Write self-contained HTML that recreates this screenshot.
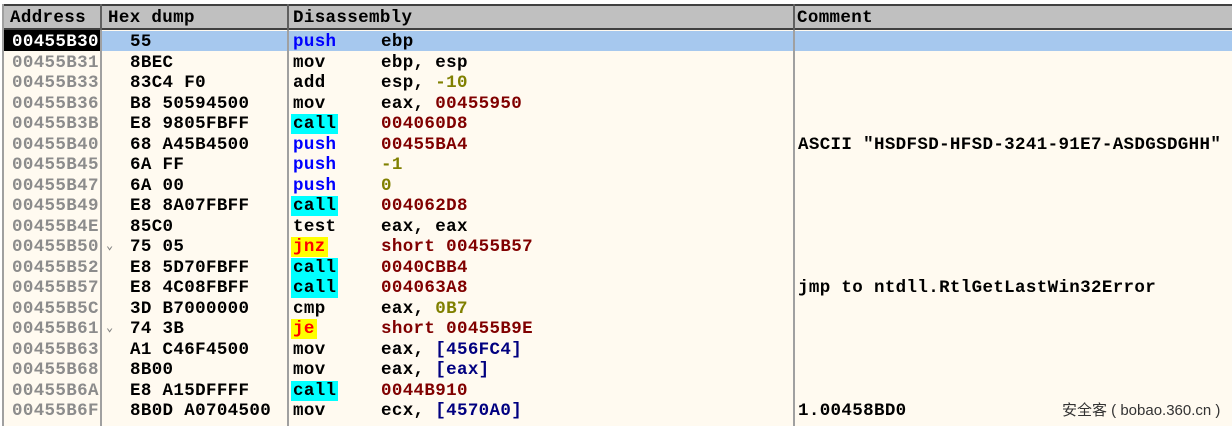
<!DOCTYPE html>
<html><head><meta charset="utf-8"><style>
*{margin:0;padding:0;box-sizing:border-box}
body{width:1232px;height:426px;background:#fff;position:relative;overflow:hidden;font-family:"Liberation Mono",monospace;font-weight:bold;font-size:17.5px;letter-spacing:0.35px}
#bg{position:absolute;left:2px;top:4px;width:1230px;height:422px;background:#fffaf0;border-left:2px solid #a0a0a0}
#hdr{position:absolute;left:4px;top:4px;width:1228px;height:26px;background:#c0c0c0;border-top:2px solid #404040;border-bottom:2px solid #404040}
.h{position:absolute;top:7px;line-height:22px;color:#000}
.vs{position:absolute;top:4px;width:2px;height:422px;background:#a0a0a0}
.vh{position:absolute;top:4px;width:2px;height:26px;background:#606060}
#sel{position:absolute;left:102px;top:31px;width:1130px;height:20px;background:#a6c8ee}
#selA{position:absolute;left:4px;top:30px;width:96px;height:21px;background:#000}
.r{position:absolute;height:20px;line-height:22px;white-space:pre}
.a{left:12px;color:#8c8c8c}
.x{left:130px;color:#000}
.m{left:293px;color:#000}
.o{left:381px;color:#000}
.c{left:798px;color:#000}
.bl{color:#0000ff}
.cy{background:#00ffff;padding:0 2px;margin-left:-2px}
.ye{background:#ffff00;color:#ff0000;padding:0 2px;margin-left:-2px}
.rd{color:#800000}
.ol{color:#808000}
.nv{color:#000080}
.ar{position:absolute;left:106px;color:#808080;font-size:12px}
#wm{position:absolute;left:1062px;top:399px;font-family:"Liberation Sans","Noto Sans CJK SC",sans-serif;font-weight:normal;font-size:15px;letter-spacing:0;color:#333}
</style></head><body>
<div id="bg"></div>
<div id="sel"></div>
<div id="selA"></div>
<div id="hdr"></div>
<div class="vs" style="left:100px"></div>
<div class="vs" style="left:287px"></div>
<div class="vs" style="left:793px"></div>
<div class="vh" style="left:100px"></div>
<div class="vh" style="left:287px"></div>
<div class="vh" style="left:793px"></div>
<div class="h" style="left:10px">Address</div>
<div class="h" style="left:108px">Hex dump</div>
<div class="h" style="left:293px">Disassembly</div>
<div class="h" style="left:797px">Comment</div>

<div class="r a" style="top:31px;color:#fff">00455B30</div><div class="r x" style="top:31px">55</div><div class="r m bl" style="top:31px">push</div><div class="r o" style="top:31px">ebp</div>
<div class="r a" style="top:51.5px">00455B31</div><div class="r x" style="top:51.5px">8BEC</div><div class="r m" style="top:51.5px">mov</div><div class="r o" style="top:51.5px">ebp, esp</div>
<div class="r a" style="top:72px">00455B33</div><div class="r x" style="top:72px">83C4 F0</div><div class="r m" style="top:72px">add</div><div class="r o" style="top:72px">esp, <span class="ol">-10</span></div>
<div class="r a" style="top:92.5px">00455B36</div><div class="r x" style="top:92.5px">B8 50594500</div><div class="r m" style="top:92.5px">mov</div><div class="r o" style="top:92.5px">eax, <span class="rd">00455950</span></div>
<div class="r a" style="top:113px">00455B3B</div><div class="r x" style="top:113px">E8 9805FBFF</div><div class="r m" style="top:113px"><span class="cy">call</span></div><div class="r o rd" style="top:113px">004060D8</div>
<div class="r a" style="top:133.5px">00455B40</div><div class="r x" style="top:133.5px">68 A45B4500</div><div class="r m bl" style="top:133.5px">push</div><div class="r o rd" style="top:133.5px">00455BA4</div><div class="r c" style="top:133.5px">ASCII "HSDFSD-HFSD-3241-91E7-ASDGSDGHH"</div>
<div class="r a" style="top:154px">00455B45</div><div class="r x" style="top:154px">6A FF</div><div class="r m bl" style="top:154px">push</div><div class="r o ol" style="top:154px">-1</div>
<div class="r a" style="top:174.5px">00455B47</div><div class="r x" style="top:174.5px">6A 00</div><div class="r m bl" style="top:174.5px">push</div><div class="r o ol" style="top:174.5px">0</div>
<div class="r a" style="top:195px">00455B49</div><div class="r x" style="top:195px">E8 8A07FBFF</div><div class="r m" style="top:195px"><span class="cy">call</span></div><div class="r o rd" style="top:195px">004062D8</div>
<div class="r a" style="top:215.5px">00455B4E</div><div class="r x" style="top:215.5px">85C0</div><div class="r m" style="top:215.5px">test</div><div class="r o" style="top:215.5px">eax, eax</div>
<div class="r a" style="top:236px">00455B50</div><div class="ar" style="top:238px">⌄</div><div class="r x" style="top:236px">75 05</div><div class="r m" style="top:236px"><span class="ye">jnz</span></div><div class="r o rd" style="top:236px">short 00455B57</div>
<div class="r a" style="top:256.5px">00455B52</div><div class="r x" style="top:256.5px">E8 5D70FBFF</div><div class="r m" style="top:256.5px"><span class="cy">call</span></div><div class="r o rd" style="top:256.5px">0040CBB4</div>
<div class="r a" style="top:277px">00455B57</div><div class="r x" style="top:277px">E8 4C08FBFF</div><div class="r m" style="top:277px"><span class="cy">call</span></div><div class="r o rd" style="top:277px">004063A8</div><div class="r c" style="top:277px">jmp to ntdll.RtlGetLastWin32Error</div>
<div class="r a" style="top:297.5px">00455B5C</div><div class="r x" style="top:297.5px">3D B7000000</div><div class="r m" style="top:297.5px">cmp</div><div class="r o" style="top:297.5px">eax, <span class="ol">0B7</span></div>
<div class="r a" style="top:318px">00455B61</div><div class="ar" style="top:320px">⌄</div><div class="r x" style="top:318px">74 3B</div><div class="r m" style="top:318px"><span class="ye">je</span></div><div class="r o rd" style="top:318px">short 00455B9E</div>
<div class="r a" style="top:338.5px">00455B63</div><div class="r x" style="top:338.5px">A1 C46F4500</div><div class="r m" style="top:338.5px">mov</div><div class="r o" style="top:338.5px">eax, <span class="nv">[456FC4]</span></div>
<div class="r a" style="top:359px">00455B68</div><div class="r x" style="top:359px">8B00</div><div class="r m" style="top:359px">mov</div><div class="r o" style="top:359px">eax, <span class="nv">[eax]</span></div>
<div class="r a" style="top:379.5px">00455B6A</div><div class="r x" style="top:379.5px">E8 A15DFFFF</div><div class="r m" style="top:379.5px"><span class="cy">call</span></div><div class="r o rd" style="top:379.5px">0044B910</div>
<div class="r a" style="top:400px">00455B6F</div><div class="r x" style="top:400px">8B0D A0704500</div><div class="r m" style="top:400px">mov</div><div class="r o" style="top:400px">ecx, <span class="nv">[4570A0]</span></div><div class="r c" style="top:400px">1.00458BD0</div>
<div id="wm">安全客 ( bobao.360.cn )</div>
</body></html>
